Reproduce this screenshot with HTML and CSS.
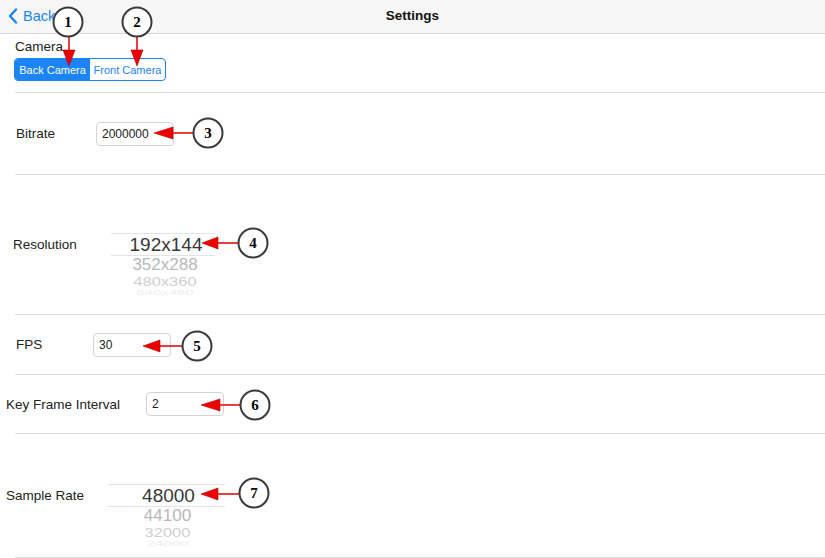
FILE: index.html
```html
<!DOCTYPE html>
<html lang="en">
<head>
    <meta charset="UTF-8">
    <meta name="viewport" content="width=device-width, initial-scale=1.0">
    <title>Settings</title>
    <link rel="stylesheet" href="styles.css">
</head>
<body>
<div class="screen">
    <div class="navbar">
        <a class="back">
            <svg class="chevron" width="10" height="16" viewBox="0 0 10 16"><path d="M8 1.5 L2 8 L8 14.5" fill="none" stroke="#1b84f6" stroke-width="2.4" stroke-linecap="round" stroke-linejoin="round"/></svg>
            Back
        </a>
        <div class="title">Settings</div>
    </div>

    <div class="row row-camera">
        <div class="label">Camera</div>
        <div class="segmented">
            <div class="seg active">Back Camera</div>
            <div class="seg">Front Camera</div>
        </div>
    </div>
    <div class="sep"></div>

    <div class="row row-bitrate">
        <div class="label">Bitrate</div>
        <input class="field" type="text" value="2000000" readonly>
    </div>
    <div class="sep"></div>

    <div class="row row-picker row-resolution">
        <div class="label">Resolution</div>
        <div class="picker">
            <div class="selected">192x144</div>
            <div class="opt opt-1">352x288</div>
            <div class="opt opt-2">480x360</div>
            <div class="opt opt-3">640x480</div>
        </div>
    </div>
    <div class="sep"></div>

    <div class="row row-fps">
        <div class="label">FPS</div>
        <input class="field" type="text" value="30" readonly>
    </div>
    <div class="sep"></div>

    <div class="row row-key">
        <div class="label">Key Frame Interval</div>
        <input class="field" type="text" value="2" readonly>
    </div>
    <div class="sep"></div>

    <div class="row row-picker row-sample">
        <div class="label">Sample Rate</div>
        <div class="picker">
            <div class="selected">48000</div>
            <div class="opt opt-1">44100</div>
            <div class="opt opt-2">32000</div>
            <div class="opt opt-3">24000</div>
        </div>
    </div>
    <div class="sep"></div>

    <!-- callouts drawn over the screenshot -->
    <svg class="callouts" width="825" height="558" viewBox="0 0 825 558">
        <g class="arrow">
            <line x1="69" y1="37" x2="69" y2="51"/>
            <polygon points="63,50 75,50 69,66"/>
            <line x1="137" y1="37" x2="137" y2="51"/>
            <polygon points="131,50 143,50 137,66"/>
            <line x1="193" y1="133" x2="172" y2="133"/>
            <polygon points="154,133 173,127 173,139"/>
            <line x1="238" y1="243" x2="217" y2="243"/>
            <polygon points="202,243 218,237 218,249"/>
            <line x1="182" y1="346" x2="159" y2="346"/>
            <polygon points="143,346 160,340 160,352"/>
            <line x1="240" y1="405" x2="219" y2="405"/>
            <polygon points="201,405 220,399 220,411"/>
            <line x1="239" y1="494" x2="217" y2="494"/>
            <polygon points="201,494 218,488 218,500"/>
        </g>
        <g class="badge">
            <circle cx="68" cy="22" r="14.5"/><text x="68" y="27">1</text>
            <circle cx="137" cy="22" r="14.5"/><text x="137" y="27">2</text>
            <circle cx="208" cy="133" r="14.5"/><text x="208" y="138">3</text>
            <circle cx="253" cy="243" r="14.5"/><text x="253" y="248">4</text>
            <circle cx="197" cy="346" r="14.5"/><text x="197" y="351">5</text>
            <circle cx="255" cy="405" r="14.5"/><text x="255" y="410">6</text>
            <circle cx="254" cy="493" r="14.5"/><text x="254" y="498">7</text>
        </g>
    </svg>
</div>
</body>
</html>
```

FILE: styles.css
```css
/* settings screen */
body {
    margin: 0;
    font-family: "Liberation Sans", Arial, sans-serif;
    background-color: #fff;
    color: #222;
}

.screen {
    position: relative;
    width: 825px;
    height: 558px;
    overflow: hidden;
}

.navbar {
    height: 33px;
    background-color: #f7f7f7;
    border-bottom: 1px solid #d6d6d6;
    display: flex;
    align-items: center;
    justify-content: center;
    position: relative;
}
.back {
    position: absolute;
    left: 8px;
    top: 8px;
    display: flex;
    align-items: center;
    gap: 5px;
    color: #1b84f6;
    font-size: 14.5px;
}
.title {
    font-weight: bold;
    font-size: 13.5px;
    color: #111;
    margin-top: -2px;
}

.label {
    font-size: 13.5px;
    color: #222;
}

.row {
    display: flex;
    align-items: center;
}

.sep {
    height: 1px;
    margin-left: 15px;
    background-color: #dadada;
}

/* camera */
.row-camera {
    height: 58px;
    flex-direction: column;
    align-items: flex-start;
    padding-left: 14px;
    box-sizing: border-box;
    padding-top: 5px;
}
.row-camera .label {
    line-height: 16px;
    margin-left: 1px;
}
.segmented {
    margin-top: 3px;
    display: flex;
    height: 23px;
    border: 1px solid #1b84f6;
    border-radius: 4px;
    overflow: hidden;
    box-sizing: border-box;
}
.seg {
    width: 75px;
    display: flex;
    align-items: center;
    justify-content: center;
    font-size: 11px;
    color: #1b84f6;
}
.seg.active {
    background-color: #1b84f6;
    color: #fff;
}

/* text fields */
.field {
    width: 78px;
    height: 24px;
    box-sizing: border-box;
    border: 1px solid #d3d3d3;
    border-radius: 4px;
    padding: 0 5px;
    font-family: "Liberation Sans", Arial, sans-serif;
    font-size: 12px;
    color: #222;
    background: #fff;
    outline: none;
}

.row-bitrate { height: 81px; padding-left: 16px; }
.row-bitrate .label { width: 80px; }

.row-fps { height: 59px; padding-left: 16px; }
.row-fps .label { width: 77px; }

.row-key { height: 58px; padding-left: 6px; }
.row-key .label { width: 140px; }

/* wheel pickers */
.row-picker {
    align-items: flex-start;
    box-sizing: border-box;
}
.row-picker .label {
    line-height: 23px;
}
.picker {
    text-align: center;
}
.picker .selected {
    height: 21px;
    line-height: 21px;
    font-size: 19px;
    color: #383838;
    border-top: 1px solid #e3e3e3;
    border-bottom: 1px solid #e3e3e3;
}
.opt-1 {
    height: 17px;
    line-height: 17px;
    font-size: 17px;
    color: #b8b8b8;
}
.opt-2 {
    height: 16px;
    line-height: 16px;
    font-size: 16.5px;
    color: #cfcfcf;
    transform: scaleY(0.8);
}
.opt-3 {
    height: 7px;
    line-height: 7px;
    font-size: 15px;
    color: #ededed;
    transform: scaleY(0.45);
}

.row-resolution { height: 139px; padding: 58px 0 0 13px; }
.row-resolution .label { width: 98px; }
.row-resolution .picker { width: 104px; }
.row-resolution .selected { padding-left: 6px; }
.row-resolution .opt { padding-left: 4px; }

.row-sample { height: 123px; padding: 50px 0 0 6px; }
.row-sample .label { width: 102px; }
.row-sample .picker { width: 117px; }
.row-sample .selected { padding-left: 4px; }
.row-sample .opt { padding-left: 2px; }

/* callouts */
.callouts {
    position: absolute;
    left: 0;
    top: 0;
}
.arrow line {
    stroke: #e00000;
    stroke-width: 1.5;
}
.arrow polygon {
    fill: #ee0000;
    stroke: #b00000;
    stroke-width: 0.6;
}
.badge circle {
    fill: #fff;
    stroke: #3a3a3a;
    stroke-width: 2;
}
.badge text {
    font-family: "Liberation Serif", "Times New Roman", serif;
    font-size: 15px;
    font-weight: bold;
    text-anchor: middle;
    fill: #000;
}
```
